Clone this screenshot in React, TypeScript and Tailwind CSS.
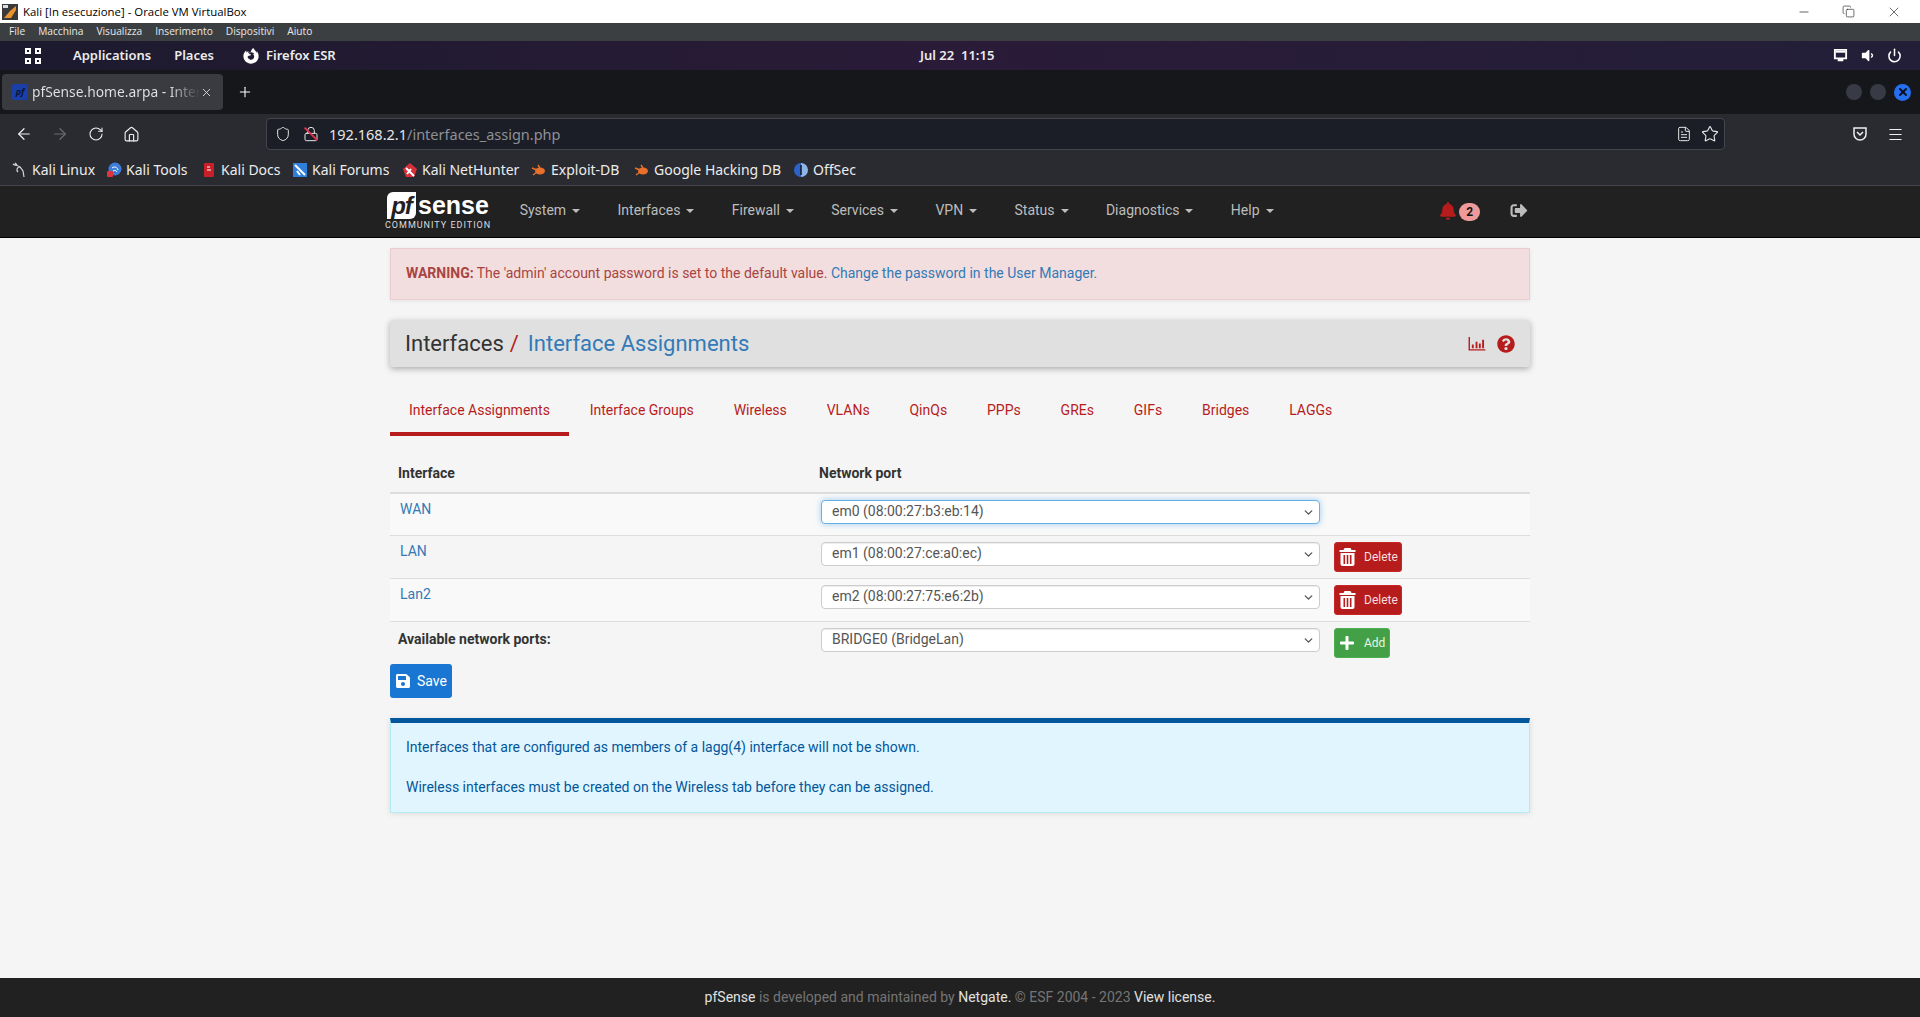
import { ArrowLeft, ArrowRight, ChevronDown, Copy, Home, Lock, Menu, Minus, Plus, RotateCw, Shield, Star, X, Power, FileText } from 'lucide-react'
import { FaBell, FaFirefoxBrowser, FaPlus, FaQuestionCircle, FaSave, FaSignOutAlt, FaVolumeDown } from 'react-icons/fa'

const vboxMenu = ['File', 'Macchina', 'Visualizza', 'Inserimento', 'Dispositivi', 'Aiuto']
const navItems = ['System', 'Interfaces', 'Firewall', 'Services', 'VPN', 'Status', 'Diagnostics', 'Help']
const tabs = ['Interface Assignments', 'Interface Groups', 'Wireless', 'VLANs', 'QinQs', 'PPPs', 'GREs', 'GIFs', 'Bridges', 'LAGGs']

function BookmarkIcon({ kind }: { kind: string }) {
  if (kind === 'linux') {
    return (
      <svg viewBox="0 0 16 16" className="h-4 w-4" fill="none" stroke="#d8d8d8" strokeWidth="1.2">
        <path d="M1 2c2 2 5 1 7 3l3 4 1 6M8 5C5 5 4 8 6 10M3 1l2 2" />
      </svg>
    )
  }
  if (kind === 'tools') {
    return (
      <svg viewBox="0 0 16 16" className="h-4 w-4">
        <circle cx="9" cy="7" r="6.5" fill="#3b7fd9" />
        <path d="M6 6c3-2 5-1 6 2M7 9c2-1 3-1 4 1" stroke="#fff" fill="none" />
        <rect x="1" y="9" width="6" height="6" rx="1" fill="#e0343c" />
      </svg>
    )
  }
  if (kind === 'docs') {
    return (
      <svg viewBox="0 0 16 16" className="h-4 w-4">
        <rect x="3" y="1" width="10" height="14" rx="1" fill="#c8202a" />
        <path d="M6 8h4M6 5h3" stroke="#fff" />
      </svg>
    )
  }
  if (kind === 'forums') {
    return (
      <svg viewBox="0 0 16 16" className="h-4 w-4">
        <rect x="1" y="1" width="14" height="14" fill="#2f7fdc" />
        <path d="M3 3l10 10M5 9l3 4" stroke="#fff" strokeWidth="2" />
      </svg>
    )
  }
  if (kind === 'hunter') {
    return (
      <svg viewBox="0 0 16 16" className="h-4 w-4">
        <path d="M1 7l7-6 7 6-3 8H4z" fill="#d8303a" />
        <path d="M4 6l8 8M5 12l4-5" stroke="#fff" strokeWidth="2" />
      </svg>
    )
  }
  if (kind === 'exploit') {
    return (
      <svg viewBox="0 0 16 16" className="h-4 w-4">
        <ellipse cx="9" cy="9" rx="5" ry="3.5" fill="#e8702a" />
        <path d="M1 6l5 2M2 13l4-3M7 3l2 3" stroke="#e8702a" strokeWidth="1.4" />
      </svg>
    )
  }
  return (
    <svg viewBox="0 0 16 16" className="h-4 w-4">
      <path d="M8 1a7 7 0 0 0 0 14z" fill="#2d62c8" />
      <path d="M8 1a7 7 0 0 1 0 14z" fill="#8fb4e8" />
      <path d="M8 3v10" stroke="#15161a" strokeWidth="1.5" />
    </svg>
  )
}

const bookmarks = [
  { kind: 'linux', label: 'Kali Linux', w: 'w-[94px]' },
  { kind: 'tools', label: 'Kali Tools', w: 'w-[95px]' },
  { kind: 'docs', label: 'Kali Docs', w: 'w-[91px]' },
  { kind: 'forums', label: 'Kali Forums', w: 'w-[110px]' },
  { kind: 'hunter', label: 'Kali NetHunter', w: 'w-[129px]' },
  { kind: 'exploit', label: 'Exploit-DB', w: 'w-[103px]' },
  { kind: 'exploit', label: 'Google Hacking DB', w: 'w-[159px]' },
  { kind: 'offsec', label: 'OffSec', w: 'w-[70px]' },
]

function TrashIcon() {
  return (
    <svg viewBox="0 0 16 18" className="h-[18px] w-[17px]" fill="#fff">
      <path d="M5 0h6l1 2h4v2H0V2h4z" />
      <path d="M1 5h14v11a2 2 0 0 1-2 2H3a2 2 0 0 1-2-2z" />
      <path d="M4 7h1.6v9H4zM7.2 7h1.6v9H7.2zM10.4 7H12v9h-1.6z" fill="#b71c1c" />
    </svg>
  )
}

function PortSelect({ value, focused }: { value: string; focused?: boolean }) {
  return (
    <div
      className={
        focused
          ? 'relative flex h-[24px] w-[499px] items-center rounded-[4px] border border-[#66afe9] bg-white pl-[10px] text-[14px] text-[#555] shadow-[0_0_6px_rgba(102,175,233,0.6)]'
          : 'relative flex h-[24px] w-[499px] items-center rounded-[4px] border border-[#ccc] bg-white pl-[10px] text-[14px] text-[#555] shadow-[inset_0_1px_1px_rgba(0,0,0,0.075)]'
      }
    >
      <span className="-mt-[1px]">{value}</span>
      <ChevronDown className="absolute right-[4px] top-[5px] h-[13px] w-[13px] text-[#555]" strokeWidth={2.5} />
    </div>
  )
}

function DeleteButton() {
  return (
    <button
      type="button"
      className="flex h-[30px] w-[68px] items-center rounded-[3px] border border-[#c62828] bg-[#b71c1c] pl-[4px] text-[12px] text-[#f5dede]"
    >
      <TrashIcon />
      <span className="ml-[8px]">Delete</span>
    </button>
  )
}

function Row({ name, port, striped, focused, height }: { name: string; port: string; striped?: boolean; focused?: boolean; height: string }) {
  return (
    <div className={`flex border-b border-[#ddd] ${height} ${striped ? 'bg-[#f9f9f9]' : ''}`}>
      <div className="w-[431px] pl-[10px] pt-[5px] text-[14px] leading-[20px] text-[#337ab7]">{name}</div>
      <div className="pt-[6px]">
        <PortSelect value={port} focused={focused} />
      </div>
      <div className="ml-[14px] pt-[6px]">{name !== 'WAN' && <DeleteButton />}</div>
    </div>
  )
}

export default function App() {
  return (
    <div className="flex h-screen flex-col overflow-hidden bg-[#f5f5f5] font-['Roboto',sans-serif]">
      {/* VirtualBox window */}
      <div className="flex h-[23px] items-center bg-white pl-[2px] font-['Open_Sans',sans-serif] text-[11.4px] text-black">
        <svg viewBox="0 0 16 16" className="h-[16px] w-[16px]">
          <rect width="16" height="16" fill="#3a3a3a" />
          <path d="M2 14l6-7 6-5v4l-5 8z" fill="#e8932c" />
          <rect x="1" y="1" width="5" height="3" fill="#ddd" />
        </svg>
        <span className="ml-[5px]">Kali [In esecuzione] - Oracle VM VirtualBox</span>
        <div className="ml-auto flex items-center gap-[31px] pr-[18px] text-[#222]">
          <Minus className="h-[14px] w-[14px]" strokeWidth={1.2} />
          <Copy className="h-[13px] w-[13px]" strokeWidth={1.2} />
          <X className="h-[16px] w-[16px]" strokeWidth={1} />
        </div>
      </div>
      <div className="flex h-[18px] items-center gap-[13px] bg-[#3c3f41] pl-[9px] font-['Open_Sans',sans-serif] text-[10.2px] text-[#e8e8e8]">
        {vboxMenu.map((m) => (
          <span key={m}>{m}</span>
        ))}
      </div>

      {/* GNOME top bar */}
      <div className="relative flex h-[29px] items-center bg-gradient-to-r from-[#1c1a2e] via-[#2a1b38] to-[#231f38] pl-[25px] font-['Noto_Sans',sans-serif] text-[13px] font-semibold text-[#ececec]">
        <svg viewBox="0 0 16 16" className="h-[16px] w-[16px]" fill="none" stroke="#fff" strokeWidth="2">
          <rect x="1" y="1" width="4" height="4" />
          <rect x="11" y="1" width="4" height="4" />
          <rect x="1" y="11" width="4" height="4" />
          <rect x="11" y="11" width="4" height="4" />
        </svg>
        <span className="ml-[32px]">Applications</span>
        <span className="ml-[23px]">Places</span>
        <FaFirefoxBrowser className="ml-[29px] h-[16px] w-[16px] text-white" />
        <span className="ml-[7px]">Firefox ESR</span>
        <span className="absolute left-[920px] whitespace-pre">Jul 22  11:15</span>
        <div className="ml-auto flex items-center gap-[12px] pr-[18px]">
          <svg viewBox="0 0 16 16" className="h-[15px] w-[15px]" fill="#fff">
            <path d="M1 1h14v11h-4v2H5v-2H1zM3 3v7h10V3z" />
            <rect x="3" y="3" width="10" height="2" />
          </svg>
          <FaVolumeDown className="h-[15px] w-[15px] text-white" />
          <Power className="h-[15px] w-[15px] text-white" strokeWidth={2.4} />
        </div>
      </div>

      {/* Firefox tab strip */}
      <div className="flex h-[44px] items-center bg-[#16171b] pl-[2px] font-['Noto_Sans',sans-serif]">
        <div className="flex h-[36px] w-[221px] items-center rounded-[4px] bg-[#3a3b40] pl-[10px] text-[13.8px]">
          <div className="flex h-[16px] w-[16px] items-center justify-center rounded-[2px] bg-[#1a3fa8] text-[9px] font-bold italic text-[#0b1530]">pf</div>
          <span className="ml-[4px] w-[168px] whitespace-nowrap bg-gradient-to-r from-[#e4e4e6] from-[82%] to-[#3a3b40] bg-clip-text text-transparent">pfSense.home.arpa - Inter</span>
          <X className="h-[13px] w-[13px] text-[#e4e4e6]" strokeWidth={1.6} />
        </div>
        <Plus className="ml-[14px] h-[16px] w-[16px] text-white" strokeWidth={1.6} />
        <div className="ml-auto flex items-center gap-[8px] pr-[9px]">
          <span className="h-[16px] w-[16px] rounded-full bg-[#383b46]" />
          <span className="h-[16px] w-[16px] rounded-full bg-[#383b46]" />
          <span className="flex h-[17px] w-[17px] items-center justify-center rounded-full bg-[#2470f0]">
            <X className="h-[12px] w-[12px] text-[#0d1020]" strokeWidth={4} />
          </span>
        </div>
      </div>

      {/* Firefox toolbar */}
      <div className="flex h-[72px] flex-col border-b border-[#45464b] bg-[#2a2b30] font-['Noto_Sans',sans-serif]">
        <div className="flex h-[40px] items-center text-[#f0f0f0]">
          <ArrowLeft className="ml-[15px] h-[18px] w-[18px]" strokeWidth={1.6} />
          <ArrowRight className="ml-[18px] h-[18px] w-[18px] text-[#6c6d72]" strokeWidth={1.6} />
          <RotateCw className="ml-[19px] h-[16px] w-[16px]" strokeWidth={1.6} />
          <Home className="ml-[19px] h-[17px] w-[17px]" strokeWidth={1.6} />
          <div className="ml-[126px] flex h-[32px] w-[1459px] items-center rounded-[4px] border border-[#45464b] bg-[#1b1e26] pl-[8px] text-[14.5px] text-[#e6e6e6]">
            <Shield className="h-[16px] w-[16px]" strokeWidth={1.5} />
            <div className="relative ml-[12px] h-[16px] w-[16px]">
              <Lock className="h-[16px] w-[16px]" strokeWidth={1.5} />
              <span className="absolute left-[7px] top-[-1px] h-[18px] w-[2px] -rotate-45 bg-[#e0324b]" />
            </div>
            <span className="ml-[10px] pt-[1px]">
              192.168.2.1<span className="text-[#8f9096]">/interfaces_assign.php</span>
            </span>
            <div className="ml-auto flex items-center gap-[9px] pr-[5px]">
              <FileText className="h-[16px] w-[16px]" strokeWidth={1.5} />
              <Star className="h-[18px] w-[18px]" strokeWidth={1.5} />
            </div>
          </div>
          <svg viewBox="0 0 16 16" className="ml-[127px] h-[16px] w-[16px]" fill="none" stroke="#f0f0f0" strokeWidth="1.5">
            <path d="M2 2h12v6a6 6 0 0 1-12 0z" />
            <path d="M5 6l3 3 3-3" />
          </svg>
          <Menu className="ml-[19px] h-[17px] w-[17px]" strokeWidth={1.5} />
        </div>
        <div className="flex h-[31px] items-center pl-[12px] text-[14px] text-[#ececec]">
          {bookmarks.map((b) => (
            <div key={b.label} className={`flex items-center gap-[4px] ${b.w}`}>
              <BookmarkIcon kind={b.kind} />
              <span className="whitespace-nowrap">{b.label}</span>
            </div>
          ))}
        </div>
      </div>

      {/* pfSense nav */}
      <div className="flex h-[52px] items-center border-b border-black bg-[#212121] pl-[385px] text-[14px] text-[#bdbdbd]">
        <div className="flex w-[116px] flex-col">
          <div className="flex items-center pl-[2px]">
            <span className="flex h-[27px] w-[29px] items-center justify-center rounded-tl-[6px] rounded-br-[6px] bg-white font-['Liberation_Sans',sans-serif] text-[24px] font-bold italic leading-none tracking-[-1px] text-[#212121]">pf</span>
            <span className="ml-[2px] font-['Liberation_Sans',sans-serif] text-[25px] font-bold leading-[27px] text-white">sense</span>
          </div>
          <span className="text-[9px] leading-[12px] tracking-[1px] text-[#dcdcdc]">COMMUNITY EDITION</span>
        </div>
        {navItems.map((n) => (
          <div key={n} className="-mt-[2px] flex items-center px-[18.7px] whitespace-nowrap">
            {n}
            <span className="ml-[6px] h-0 w-0 border-x-[4px] border-t-[4px] border-x-transparent border-t-[#bdbdbd]" />
          </div>
        ))}
        <div className="relative ml-[147px] -mt-[2px] flex items-center">
          <FaBell className="h-[18px] w-[18px] text-[#b71c1c]" />
          <span className="ml-[2px] mt-[3px] flex h-[18px] w-[21px] items-center justify-center rounded-full bg-[#ef9a9a] text-[12px] font-bold text-[#111]">2</span>
        </div>
        <FaSignOutAlt className="ml-[30px] -mt-[3px] h-[17px] w-[18px] text-[#bdbdbd]" />
      </div>

      {/* Page */}
      <div className="flex-1">
        <div className="mx-auto w-[1140px] pt-[10px]">
          <div className="flex h-[52px] items-center border border-[#ebccd1] bg-[#f2dede] pb-[2px] pl-[15px] text-[14px] text-[#a94442] shadow-[0_1px_4px_rgba(0,0,0,0.08)]">
            <b className="mr-[3px]">WARNING:</b> The 'admin' account password is set to the default value.&nbsp;
            <span className="text-[#337ab7]">Change the password in the User Manager.</span>
          </div>

          <div className="mt-[20px] flex h-[47px] items-center rounded-[3px] bg-[#e0e0e0] px-[15px] text-[22px] shadow-[0_2px_6px_rgba(0,0,0,0.3)]">
            <span className="text-[#333]">Interfaces</span>
            <span className="ml-[6px] text-[#b71c1c]">/</span>
            <span className="ml-[9px] text-[#337ab7]">Interface Assignments</span>
            <div className="ml-auto flex items-center gap-[11px]">
              <svg viewBox="0 0 18 16" className="h-[15px] w-[18px]" fill="#b71c1c">
                <path d="M0 1h1.5v13H18v1.5H0z" />
                <path d="M3.5 9h2v4h-2zM7.5 6h2v7h-2zM11 8h2v5h-2zM14.5 4h2v9h-2z" />
              </svg>
              <FaQuestionCircle className="h-[18px] w-[18px] text-[#b71c1c]" />
            </div>
          </div>

          <div className="mt-[18px] flex h-[51px] gap-[2px] text-[14px] text-[#b71c1c]">
            {tabs.map((t, i) => (
              <div key={t} className={i === 0 ? 'border-b-4 border-[#b71c1c] px-[18.95px] pt-[15px]' : 'px-[18.95px] pt-[15px]'}>
                {t}
              </div>
            ))}
          </div>

          <div className="mt-[18px] flex h-[40px] border-b-2 border-[#ddd] text-[14px] font-bold text-[#333]">
            <div className="w-[429px] pl-[8px] pt-[9px]">Interface</div>
            <div className="pt-[9px]">Network port</div>
          </div>
          <Row name="WAN" port="em0 (08:00:27:b3:eb:14)" striped focused height="h-[42px]" />
          <Row name="LAN" port="em1 (08:00:27:ce:a0:ec)" height="h-[43px]" />
          <Row name="Lan2" port="em2 (08:00:27:75:e6:2b)" striped height="h-[43px]" />
          <div className="flex h-[42px]">
            <div className="w-[431px] pl-[8px] pt-[7px] text-[14px] font-bold text-[#333]">Available network ports:</div>
            <div className="pt-[6px]">
              <PortSelect value="BRIDGE0 (BridgeLan)" />
            </div>
            <div className="ml-[14px] pt-[6px]">
              <button
                type="button"
                className="flex h-[30px] w-[56px] items-center rounded-[3px] border border-[#4caf50] bg-[#43a047] pl-[4px] text-[12px] text-[#e8f5e9]"
              >
                <FaPlus className="h-[16px] w-[16px] text-white" />
                <span className="ml-[9px]">Add</span>
              </button>
            </div>
          </div>

          <button
            type="button"
            className="flex h-[34px] w-[62px] items-center rounded-[3px] bg-[#1976d2] pl-[5px] text-[14px] text-white"
          >
            <FaSave className="h-[16px] w-[16px]" />
            <span className="ml-[6px]">Save</span>
          </button>

          <div className="mt-[20px] h-[95px] border border-t-[5px] border-[#b2ebf2] border-t-[#01579b] bg-[#e1f5fe] pl-[15px] pt-[14px] text-[14px] text-[#01579b] shadow-[0_1px_6px_rgba(0,0,0,0.1)]">
            <p className="leading-[20px]">Interfaces that are configured as members of a lagg(4) interface will not be shown.</p>
            <p className="mt-[20px] leading-[20px]">Wireless interfaces must be created on the Wireless tab before they can be assigned.</p>
          </div>
        </div>
      </div>

      {/* Footer */}
      <div className="flex h-[39px] items-center justify-center bg-[#212121] text-[14px] text-[#757575]">
        <span className="whitespace-pre">
          <span className="text-[#e0e0e0]">pfSense</span> is developed and maintained by <span className="text-[#e0e0e0]">Netgate.</span> © ESF 2004 - 2023 <span className="text-[#e0e0e0]">View license.</span>
        </span>
      </div>
    </div>
  )
}
